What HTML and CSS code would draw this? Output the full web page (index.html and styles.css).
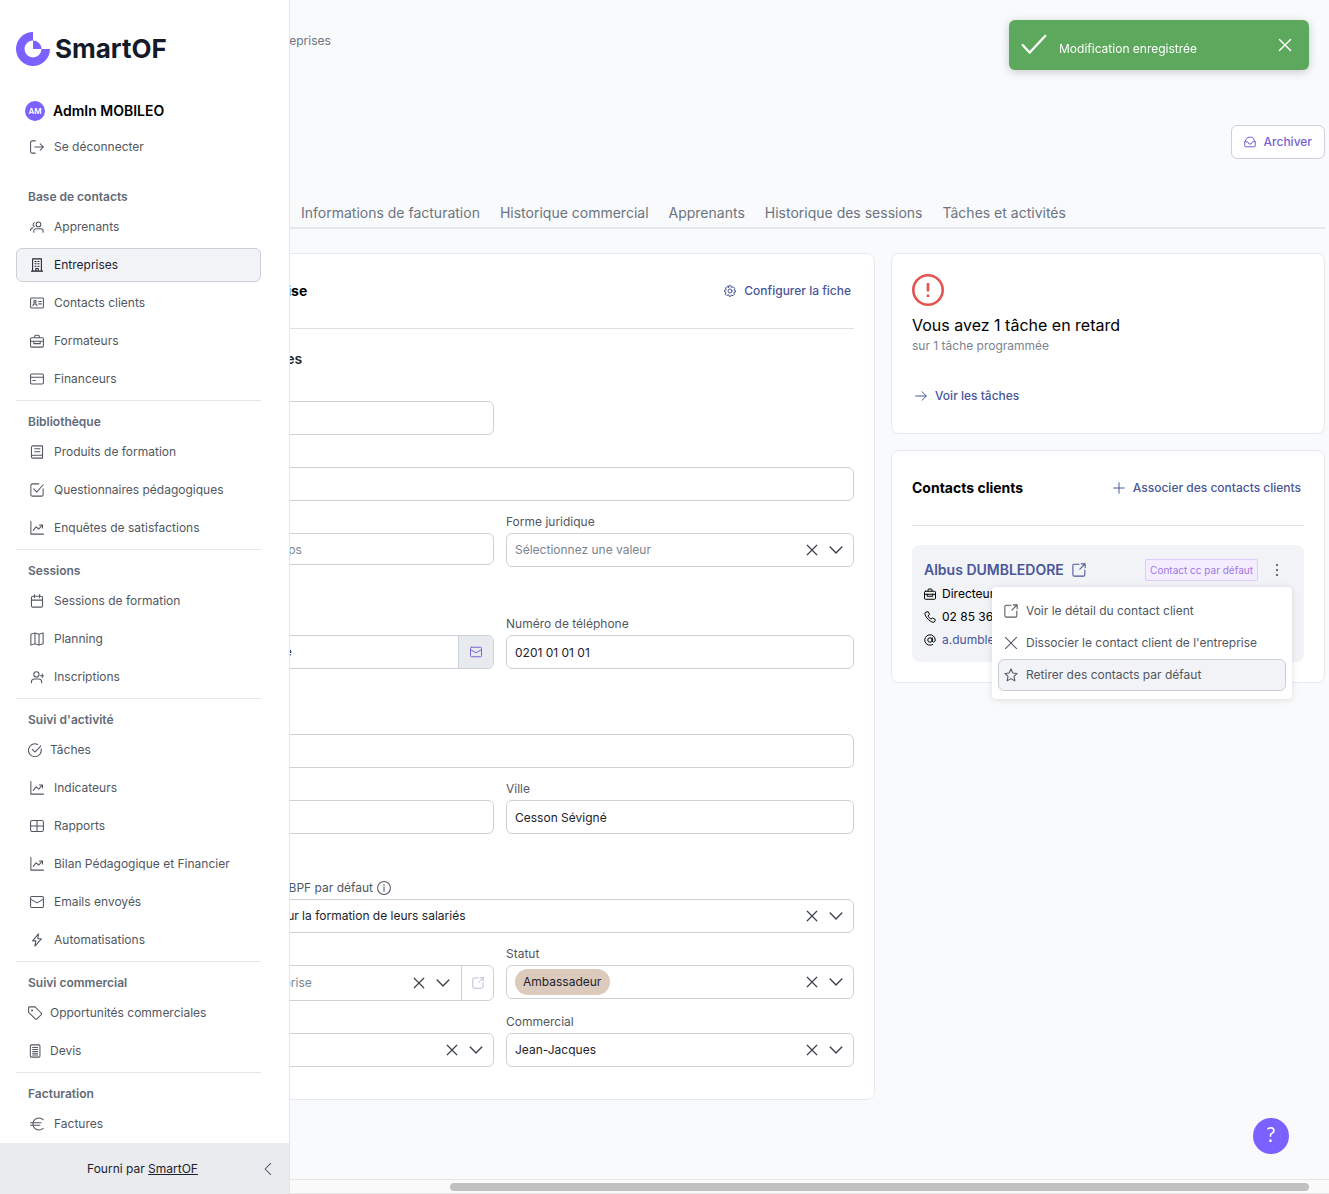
FILE: index.html
```html
<!DOCTYPE html>
<html lang="fr">
<head>
    <meta charset="UTF-8">
    <meta name="viewport" content="width=device-width, initial-scale=1.0">
    <title>SmartOF - Entreprises</title>
    <link rel="stylesheet" href="styles.css">
</head>
<body>
    <!-- Icon set -->
    <svg class="sprite" aria-hidden="true">
        <symbol id="i-logout" viewBox="0 0 24 24"><path d="M9 1.500H4a3 3 0 0 0-3 3v15a3 3 0 0 0 3 3h5M8 12h15M17.500 6.500 23 12l-5.500 5.500"/></symbol>
        <symbol id="i-users" viewBox="0 0 24 24"><circle cx="14.500" cy="7.500" r="4"/><path d="M6.500 21v-2a4 4 0 0 1 4-4h8a4 4 0 0 1 4 4v2M7.500 4.500a3.500 3.500 0 0 0 0 6.500M1 18v-1a4 4 0 0 1 4-3.500"/></symbol>
        <symbol id="i-building" viewBox="0 0 24 24"><path d="M4.500 1.500h15v21h-15zM2.500 22.500h19M10 22v-4h4v4"/><path d="M8.500 6h2M13.500 6h2M8.500 10h2M13.500 10h2M8.500 14h2M13.500 14h2"/></symbol>
        <symbol id="i-idcard" viewBox="0 0 24 24"><rect x="1" y="3.500" width="22" height="17" rx="1.500"/><circle cx="8.500" cy="9.500" r="2"/><path d="M5 16.500c0-4 7-4 7 0M15 9.500h4.500M15 13.500h4.500"/></symbol>
        <symbol id="i-briefcase" viewBox="0 0 24 24"><rect x="1" y="6.500" width="22" height="16" rx="2"/><path d="M8 6V4a2 2 0 0 1 2-2h4a2 2 0 0 1 2 2v2M1.500 12.500h21M6.500 12.500v4h11v-4"/></symbol>
        <symbol id="i-card" viewBox="0 0 24 24"><rect x="1" y="3.500" width="22" height="17" rx="2"/><path d="M1 9h22M5 14.500h4"/></symbol>
        <symbol id="i-book" viewBox="0 0 24 24"><path d="M21.500 17.500H5a2.500 2.500 0 0 0 0 5h16.500V1.500H5A2.500 2.500 0 0 0 2.500 4v16M8 6.500h9M8 11.500h9"/></symbol>
        <symbol id="i-check-square" viewBox="0 0 24 24"><path d="M22.500 10v10a2.500 2.500 0 0 1-2.500 2.500H4A2.500 2.500 0 0 1 1.500 20V4A2.500 2.500 0 0 1 4 1.500h11M6.500 10l5 5.500L22.500 3"/></symbol>
        <symbol id="i-chart" viewBox="0 0 24 24"><path d="M1.500 1v21.500H23M5.500 16l5-6 4.500 4 6-7M16 7h5.500v5"/></symbol>
        <symbol id="i-calendar" viewBox="0 0 24 24"><rect x="2.500" y="4" width="19" height="18.500" rx="2.500"/><path d="M2.500 10.500h19M7.500 1v5.500M16.500 1v5.500"/></symbol>
        <symbol id="i-map" viewBox="0 0 24 24"><path d="M1.500 4 8.500 1.500l7 2.500 7-2.500V20l-7 2.500-7-2.500-7 2.500zM8.500 1.500V20M15.500 4v18.500"/></symbol>
        <symbol id="i-user-plus" viewBox="0 0 24 24"><circle cx="11" cy="7.500" r="4.500"/><path d="M2.500 22v-2a5 5 0 0 1 5-4.500h7.500a5 5 0 0 1 5 4.500v2M21 7v6M18 10h6"/></symbol>
        <symbol id="i-check-circle" viewBox="0 0 24 24"><path d="M22.500 10a11 11 0 1 1-6-7.500M7.500 11l4.500 4.500L22 5"/></symbol>
        <symbol id="i-table" viewBox="0 0 24 24"><rect x="1" y="2.500" width="22" height="19" rx="3"/><path d="M1 12h22M12 2.500v19"/></symbol>
        <symbol id="i-mail" viewBox="0 0 24 24"><rect x="1" y="2.500" width="22" height="19" rx="2"/><path d="M1.500 7.500 12 13.500l10.500-6"/></symbol>
        <symbol id="i-bolt" viewBox="0 0 24 24"><path d="M14.500 1.500 4.500 13.500h5.500l-1.500 9 11-12.500h-6z"/></symbol>
        <symbol id="i-tag" viewBox="0 0 24 24"><path d="M1 2.500v8.500L12.500 22a2 2 0 0 0 3 0l7-7a2 2 0 0 0 0-3L12 1.500H2A1 1 0 0 0 1 2.500z"/><circle cx="7" cy="7.500" r=".8"/></symbol>
        <symbol id="i-doc" viewBox="0 0 24 24"><rect x="4" y="1.500" width="16.500" height="21" rx="2"/><path d="M8 6h8.500M8 9.500h8.500M8 13h8.500M8 16h8.500M8 19h8.500"/></symbol>
        <symbol id="i-euro" viewBox="0 0 24 24"><path d="M22.500 4.500A10.500 10.500 0 0 0 5 12a10.500 10.500 0 0 0 17.500 7.500M1 10h18M1 14h16"/></symbol>
        <symbol id="i-cog" viewBox="0 0 24 24"><circle cx="12" cy="12" r="4"/><path d="M10 1.500h4l1 3.500 3.500-1.500 3 3L20 10l3 1v3l-3.500 1 1.500 3.500-3 3-3.500-1.500-1 2.500h-3.500L9 19.500 5.500 21l-3-3L4 14.500 1 13.500v-3L4.500 9.500 3 6l3-3L9 5z"/></symbol>
        <symbol id="i-inbox" viewBox="0 0 24 24"><path d="M1.500 12v8A1.500 1.500 0 0 0 3 21.500h18a1.500 1.500 0 0 0 1.500-1.500v-8l-5-8.500A2 2 0 0 0 16 2.500H8a2 2 0 0 0-1.500 1zM1.500 11.500h5.500l3 4.500h4l3-4.500h5.500"/></symbol>
        <symbol id="i-arrow" viewBox="0 0 24 24"><path d="M1.500 12h21M14 3.500l8.500 8.500-8.500 8.500"/></symbol>
        <symbol id="i-plus" viewBox="0 0 24 24"><path d="M12 1.500v21M1.500 12h21"/></symbol>
        <symbol id="i-close" viewBox="0 0 24 24"><path d="m2.500 2.500 19 19M21.500 2.500l-19 19"/></symbol>
        <symbol id="i-down" viewBox="0 0 24 24"><path d="m2 7 10 10L22 7"/></symbol>
        <symbol id="i-left" viewBox="0 0 24 24"><path d="M16.500 2.500 7 12l9.500 9.500"/></symbol>
        <symbol id="i-external" viewBox="0 0 24 24"><path d="M12 2H4a2.500 2.500 0 0 0-2.500 2.500V20A2.500 2.500 0 0 0 4 22.500h15.500A2.500 2.500 0 0 0 22 20v-8M16 1.500h6.500V8M22.500 1.500 13.500 10.500"/></symbol>
        <symbol id="i-info" viewBox="0 0 24 24"><circle cx="12" cy="12" r="11"/><path d="M12 10.500v7M12 6v1.500"/></symbol>
        <symbol id="i-phone" viewBox="0 0 24 24"><path d="M7.500 1.500 3 2.500C1 4 1.500 8.500 5.500 13.500 10 19 16 23.500 20 22.500l2.500-3.500v-2l-5.500-3-3 2c-2.500-1-5-3.500-6-6l2.500-3z"/></symbol>
        <symbol id="i-at" viewBox="0 0 24 24"><circle cx="12" cy="12" r="4.500"/><path d="M16.500 7.500V13c0 4.500 6 4 6-1A10.500 10.500 0 1 0 17.500 21"/></symbol>
        <symbol id="i-star" viewBox="0 0 24 24"><path d="m12 1.500 3.200 7 7.300.8-5.400 5 1.500 7.700L12 18.200 5.400 22l1.500-7.700-5.400-5 7.300-.8z"/></symbol>
        <symbol id="i-check" viewBox="0 0 24 24"><path d="m1.500 12 6.500 7L22.500 3.500"/></symbol>
    </svg>

    <!-- Sidebar -->
    <aside class="sidebar">
        <div class="sidebar-body">
            <a class="logo" href="#">
                <svg width="34" height="34" viewBox="0 0 34 34" aria-hidden="true">
                    <path fill="#7b61ff" d="M17 0A17 17 0 1 0 34 17H25.500A8.500 8.500 0 1 1 17 8.500z"/>
                    <path fill="#7b61ff" d="M17 8.500A8.500 8.500 0 0 1 25.500 17H17z"/>
                </svg>
                <span>SmartOF</span>
            </a>
            <div class="user">
                <span class="avatar">AM</span>
                <span class="user-name">AdmIn MOBILEO</span>
            </div>
            <a class="nav-item" href="#"><span class="nav-icon"><svg class="icon"><use href="#i-logout"/></svg></span>Se déconnecter</a>

            <nav>
                <section class="nav-section">
                    <h2>Base de contacts</h2>
                    <a class="nav-item" href="#"><span class="nav-icon"><svg class="icon"><use href="#i-users"/></svg></span>Apprenants</a>
                    <a class="nav-item active" href="#"><span class="nav-icon"><svg class="icon"><use href="#i-building"/></svg></span>Entreprises</a>
                    <a class="nav-item" href="#"><span class="nav-icon"><svg class="icon"><use href="#i-idcard"/></svg></span>Contacts clients</a>
                    <a class="nav-item" href="#"><span class="nav-icon"><svg class="icon"><use href="#i-briefcase"/></svg></span>Formateurs</a>
                    <a class="nav-item" href="#"><span class="nav-icon"><svg class="icon"><use href="#i-card"/></svg></span>Financeurs</a>
                </section>
                <section class="nav-section">
                    <h2>Bibliothèque</h2>
                    <a class="nav-item" href="#"><span class="nav-icon"><svg class="icon"><use href="#i-book"/></svg></span>Produits de formation</a>
                    <a class="nav-item" href="#"><span class="nav-icon"><svg class="icon"><use href="#i-check-square"/></svg></span>Questionnaires pédagogiques</a>
                    <a class="nav-item" href="#"><span class="nav-icon"><svg class="icon"><use href="#i-chart"/></svg></span>Enquêtes de satisfactions</a>
                </section>
                <section class="nav-section">
                    <h2>Sessions</h2>
                    <a class="nav-item" href="#"><span class="nav-icon"><svg class="icon"><use href="#i-calendar"/></svg></span>Sessions de formation</a>
                    <a class="nav-item" href="#"><span class="nav-icon"><svg class="icon"><use href="#i-map"/></svg></span>Planning</a>
                    <a class="nav-item" href="#"><span class="nav-icon"><svg class="icon"><use href="#i-user-plus"/></svg></span>Inscriptions</a>
                </section>
                <section class="nav-section">
                    <h2>Suivi d'activité</h2>
                    <a class="nav-item" href="#"><span class="nav-icon narrow"><svg class="icon"><use href="#i-check-circle"/></svg></span>Tâches</a>
                    <a class="nav-item" href="#"><span class="nav-icon"><svg class="icon"><use href="#i-chart"/></svg></span>Indicateurs</a>
                    <a class="nav-item" href="#"><span class="nav-icon"><svg class="icon"><use href="#i-table"/></svg></span>Rapports</a>
                    <a class="nav-item" href="#"><span class="nav-icon"><svg class="icon"><use href="#i-chart"/></svg></span>Bilan Pédagogique et Financier</a>
                    <a class="nav-item" href="#"><span class="nav-icon"><svg class="icon"><use href="#i-mail"/></svg></span>Emails envoyés</a>
                    <a class="nav-item" href="#"><span class="nav-icon"><svg class="icon"><use href="#i-bolt"/></svg></span>Automatisations</a>
                </section>
                <section class="nav-section">
                    <h2>Suivi commercial</h2>
                    <a class="nav-item" href="#"><span class="nav-icon narrow"><svg class="icon"><use href="#i-tag"/></svg></span>Opportunités commerciales</a>
                    <a class="nav-item" href="#"><span class="nav-icon narrow"><svg class="icon"><use href="#i-doc"/></svg></span>Devis</a>
                </section>
                <section class="nav-section">
                    <h2>Facturation</h2>
                    <a class="nav-item" href="#"><span class="nav-icon"><svg class="icon"><use href="#i-euro"/></svg></span>Factures</a>
                </section>
            </nav>
        </div>
        <footer class="sidebar-footer">
            <p>Fourni par <a href="#">SmartOF</a></p>
            <button type="button" aria-label="Réduire le menu"><svg class="icon"><use href="#i-left"/></svg></button>
        </footer>
    </aside>

    <!-- Scrolled page -->
    <main class="main">
        <div class="viewport">
            <div class="content">
                <div class="breadcrumb"><a href="#">Base des contacts OF</a> &nbsp;/&nbsp; <a href="#">Entreprises</a></div>

                <div class="page-actions">
                    <button class="btn-archive" type="button"><svg class="icon small"><use href="#i-inbox"/></svg>Archiver</button>
                </div>

                <div class="tabs">
                    <a class="tab-first" href="#">Fiche entreprise</a>
                    <a href="#">Informations de facturation</a>
                    <a href="#">Historique commercial</a>
                    <a href="#">Apprenants</a>
                    <a href="#">Historique des sessions</a>
                    <a href="#">Tâches et activités</a>
                </div>

                <div class="columns">
                    <form class="card">
                        <div class="card-header">
                            <h2>Informations Entreprise</h2>
                            <button class="btn-link" type="button"><svg class="icon small"><use href="#i-cog"/></svg>Configurer la fiche</button>
                        </div>

                        <div class="form-section">
                            <h3>Informations générales</h3>
                            <div class="form-grid">
                                <div class="field">
                                    <label for="code">Code</label>
                                    <input class="control" type="text" id="code">
                                </div>
                                <div class="field wide">
                                    <label for="name">Nom</label>
                                    <input class="control" type="text" id="name">
                                </div>
                                <div class="field">
                                    <label for="siret">SIRET</label>
                                    <input class="control short" type="text" id="siret" placeholder="Remplissez ces 3 champs">
                                </div>
                                <div class="field">
                                    <label for="forme">Forme juridique</label>
                                    <div class="control select">
                                        <select id="forme" class="empty"><option>Sélectionnez une valeur</option></select>
                                        <button type="button" aria-label="Effacer"><svg class="icon small"><use href="#i-close"/></svg></button>
                                        <svg class="icon"><use href="#i-down"/></svg>
                                    </div>
                                </div>
                            </div>
                        </div>

                        <div class="form-section">
                            <h3>Coordonnées</h3>
                            <div class="form-grid">
                                <div class="field">
                                    <label for="email">Email</label>
                                    <div class="control group">
                                        <input type="email" id="email" value="contact@monentreprise">
                                        <button class="addon filled" type="button" aria-label="Envoyer un email"><svg class="icon small"><use href="#i-mail"/></svg></button>
                                    </div>
                                </div>
                                <div class="field">
                                    <label for="phone">Numéro de téléphone</label>
                                    <input class="control" type="tel" id="phone" value="0201 01 01 01">
                                </div>
                            </div>
                        </div>

                        <div class="form-section">
                            <h3>Adresse</h3>
                            <div class="form-grid">
                                <div class="field wide">
                                    <label for="street">Adresse</label>
                                    <input class="control" type="text" id="street">
                                </div>
                                <div class="field">
                                    <label for="zip">Code postal</label>
                                    <input class="control" type="text" id="zip">
                                </div>
                                <div class="field">
                                    <label for="city">Ville</label>
                                    <input class="control" type="text" id="city" value="Cesson Sévigné">
                                </div>
                            </div>
                        </div>

                        <div class="form-section">
                            <h3>Suivi</h3>
                            <div class="form-grid">
                                <div class="field wide">
                                    <label for="bpf">Origines de financement BPF par défaut <svg class="icon"><use href="#i-info"/></svg></label>
                                    <div class="control select">
                                        <select id="bpf"><option>Produits Entreprises pour la formation de leurs salariés</option></select>
                                        <button type="button" aria-label="Effacer"><svg class="icon small"><use href="#i-close"/></svg></button>
                                        <svg class="icon"><use href="#i-down"/></svg>
                                    </div>
                                </div>
                                <div class="field">
                                    <label for="parent">Entreprise mère</label>
                                    <div class="control select group tall">
                                        <select id="parent" class="empty"><option>Sélectionner une entreprise</option></select>
                                        <button type="button" aria-label="Effacer"><svg class="icon small"><use href="#i-close"/></svg></button>
                                        <svg class="icon"><use href="#i-down"/></svg>
                                        <button class="addon" type="button" aria-label="Ouvrir" disabled><svg class="icon small"><use href="#i-external"/></svg></button>
                                    </div>
                                </div>
                                <div class="field">
                                    <label for="status">Statut</label>
                                    <div class="control select">
                                        <select id="status" class="tag"><option>Ambassadeur</option></select>
                                        <button type="button" aria-label="Effacer"><svg class="icon small"><use href="#i-close"/></svg></button>
                                        <svg class="icon"><use href="#i-down"/></svg>
                                    </div>
                                </div>
                                <div class="field">
                                    <label for="origin">Origine</label>
                                    <div class="control select">
                                        <select id="origin"><option></option></select>
                                        <button type="button" aria-label="Effacer"><svg class="icon small"><use href="#i-close"/></svg></button>
                                        <svg class="icon"><use href="#i-down"/></svg>
                                    </div>
                                </div>
                                <div class="field">
                                    <label for="sales">Commercial</label>
                                    <div class="control select">
                                        <select id="sales"><option>Jean-Jacques</option></select>
                                        <button type="button" aria-label="Effacer"><svg class="icon small"><use href="#i-close"/></svg></button>
                                        <svg class="icon"><use href="#i-down"/></svg>
                                    </div>
                                </div>
                            </div>
                        </div>
                    </form>

                    <div class="side">
                        <section class="card">
                            <svg class="alert-icon" viewBox="0 0 32 32" aria-hidden="true">
                                <circle cx="16" cy="16" r="14.700"/>
                                <path d="M16 9v8.500M16 20.500v2.500"/>
                            </svg>
                            <p class="task-title">Vous avez 1 tâche en retard</p>
                            <p class="task-sub">sur 1 tâche programmée</p>
                            <a class="btn-link task-link" href="#"><svg class="icon small"><use href="#i-arrow"/></svg>Voir les tâches</a>
                        </section>

                        <section class="card">
                            <div class="card-header">
                                <h2>Contacts clients</h2>
                                <button class="btn-link" type="button"><svg class="icon small"><use href="#i-plus"/></svg>Associer des contacts clients</button>
                            </div>
                            <div class="contact">
                                <div class="contact-head">
                                    <a class="contact-name" href="#">Albus DUMBLEDORE <svg class="icon"><use href="#i-external"/></svg></a>
                                    <span class="badge">Contact cc par défaut</span>
                                    <button class="btn-more" type="button" aria-label="Actions">
                                        <svg viewBox="0 0 4 14" aria-hidden="true"><circle cx="2" cy="2" r="1"/><circle cx="2" cy="7" r="1"/><circle cx="2" cy="12" r="1"/></svg>
                                    </button>
                                </div>
                                <p class="contact-line"><svg class="icon small"><use href="#i-briefcase"/></svg>Directeur</p>
                                <p class="contact-line"><svg class="icon small"><use href="#i-phone"/></svg>02 85 36 00 00</p>
                                <p class="contact-line"><svg class="icon small"><use href="#i-at"/></svg><a href="#">a.dumbledore</a></p>

                                <div class="menu">
                                    <button type="button"><svg class="icon"><use href="#i-external"/></svg>Voir le détail du contact client</button>
                                    <button type="button"><svg class="icon"><use href="#i-close"/></svg>Dissocier le contact client de l'entreprise</button>
                                    <button class="active" type="button"><svg class="icon"><use href="#i-star"/></svg>Retirer des contacts par défaut</button>
                                </div>
                            </div>
                        </section>
                    </div>
                </div>
            </div>
        </div>
        <div class="scrollbar"><div class="scrollbar-thumb"></div></div>
    </main>

    <div class="toast" role="status">
        <svg class="toast-check"><use href="#i-check"/></svg>
        <span>Modification enregistrée</span>
        <button type="button" aria-label="Fermer"><svg class="icon"><use href="#i-close"/></svg></button>
    </div>

    <button class="help" type="button" aria-label="Aide">?</button>
</body>
</html>
```

FILE: styles.css
```css
* {
    box-sizing: border-box;
}

body {
    margin: 0;
    display: flex;
    height: 100vh;
    overflow: hidden;
    background-color: #f9fafc;
    color: #000;
    font-family: Inter, "Liberation Sans", sans-serif;
    font-size: 12px;
    line-height: 18px;
}

h2, h3, p {
    margin: 0;
}

a {
    color: inherit;
    text-decoration: none;
}

button, input, select {
    font: inherit;
    color: inherit;
}

button {
    background: none;
    border: none;
    padding: 0;
    cursor: pointer;
}

.sprite {
    display: none;
}

.icon {
    width: 14px;
    height: 14px;
    flex: none;
    fill: none;
    stroke: currentColor;
    stroke-width: 1.8;
    stroke-linecap: round;
    stroke-linejoin: round;
}

.icon.small {
    width: 12px;
    height: 12px;
    stroke-width: 2;
}

/* Sidebar */
.sidebar {
    width: 290px;
    flex: none;
    display: flex;
    flex-direction: column;
    background-color: #fff;
    border-right: 1px solid #e3e6ea;
    color: #515761;
}

.sidebar-body {
    flex: 1;
    min-height: 0;
    overflow: hidden;
    padding: 32px 28px 0 16px;
}

.logo {
    display: flex;
    align-items: center;
    gap: 5px;
    height: 34px;
    color: #141a29;
    font-size: 26px;
    font-weight: 700;
}

.user {
    display: flex;
    align-items: center;
    gap: 8px;
    margin: 35px 0 9px;
    padding-left: 9px;
}

.avatar {
    width: 20px;
    height: 20px;
    border-radius: 50%;
    background-color: #7b61ff;
    color: #fff;
    font-size: 8px;
    font-weight: 600;
    line-height: 20px;
    text-align: center;
}

.user-name {
    color: #000;
    font-size: 14px;
    font-weight: 600;
}

.nav-item {
    display: flex;
    align-items: center;
    gap: 8px;
    height: 34px;
    margin-bottom: 4px;
    padding: 0 11px;
    border: 1px solid transparent;
    border-radius: 6px;
}

.nav-item.active {
    background-color: #f1f3f7;
    border-color: #cbd0d6;
    color: #1c222c;
}

.nav-icon {
    width: 18px;
    display: flex;
    justify-content: center;
}

.nav-icon.narrow {
    width: 14px;
}

nav {
    padding-top: 8px;
}

.nav-section {
    padding-top: 12px;
    border-bottom: 1px solid #e3e6ea;
}

.nav-section h2 {
    margin-bottom: 4px;
    padding-left: 12px;
    font-size: 12px;
    font-weight: 600;
    color: #626a77;
}

.sidebar-footer {
    display: flex;
    align-items: center;
    height: 51px;
    padding: 0 14px 0 24px;
    background-color: #e9ebef;
    color: #1c222c;
}

.sidebar-footer p {
    flex: 1;
    text-align: center;
}

.sidebar-footer a {
    text-decoration: underline;
}

.sidebar-footer button {
    display: flex;
    color: #515761;
}

/* Page, scrolled all the way to the right */
.main {
    flex: 1;
    min-width: 0;
    display: flex;
    flex-direction: column;
}

.viewport {
    flex: 1;
    min-height: 0;
    overflow: hidden;
    display: flex;
    justify-content: flex-end;
}

.content {
    flex: none;
    width: calc(100% + 165px);
    padding: 32px 4px 0 0;
}

.breadcrumb {
    color: #6b7480;
}

.page-actions {
    display: flex;
    justify-content: flex-end;
    margin-top: 75px;
}

.btn-archive {
    display: flex;
    align-items: center;
    gap: 8px;
    height: 34px;
    padding: 0 12px;
    background-color: #fff;
    border: 1px solid #ccd1da;
    border-radius: 6px;
    color: #7a5fd3;
    font-weight: 500;
}

.tabs {
    display: flex;
    gap: 20px;
    margin-top: 44px;
    padding-bottom: 4px;
    border-bottom: 2px solid #e5e8ec;
    color: #6b7480;
    font-size: 14px;
    line-height: 20px;
    white-space: nowrap;
}

.tab-first {
    width: 156px;
}

.columns {
    display: grid;
    grid-template-columns: minmax(0, 750fr) minmax(0, 434fr);
    align-items: start;
    gap: 16px;
    margin-top: 24px;
}

.side {
    display: grid;
    gap: 16px;
}

.card {
    padding: 20px;
    background-color: #fff;
    border: 1px solid #e6e9f0;
    border-radius: 8px;
}

.card-header {
    display: flex;
    align-items: center;
    justify-content: space-between;
    margin-bottom: 19px;
    padding-bottom: 20px;
    border-bottom: 1px solid #dcdfe3;
}

.card-header h2 {
    font-size: 14px;
    font-weight: 700;
}

.btn-link {
    display: flex;
    align-items: center;
    gap: 8px;
    height: 34px;
    padding: 0 3px;
    color: #4a5699;
    font-weight: 500;
}

/* Form */
.form-section h3 {
    padding: 4px 0 9px;
    color: #1c222c;
    font-size: 14px;
    font-weight: 600;
    line-height: 20px;
}

.card-header + .form-section {
    padding-bottom: 3px;
}

.card-header + .form-section h3 {
    padding: 1px 0 12px;
}

.form-grid {
    display: grid;
    grid-template-columns: 1fr 1fr;
    column-gap: 12px;
}

.field {
    margin-bottom: 12px;
}

.field.wide {
    grid-column: span 2;
}

.field label {
    display: flex;
    align-items: center;
    gap: 4px;
    height: 20px;
    padding-bottom: 2px;
    color: #515761;
}

.control {
    display: block;
    width: 100%;
    height: 34px;
    padding: 0 8px;
    background-color: #fff;
    border: 1px solid #ced2d7;
    border-radius: 6px;
    color: #1c222c;
}

.control.short {
    height: 32px;
}

.control.tall {
    height: 36px;
}

.control::placeholder {
    color: #7b838f;
}

.control.select {
    display: flex;
    align-items: center;
    gap: 11px;
    padding-right: 10px;
}

.control select {
    flex: 1;
    min-width: 0;
    padding: 0;
    appearance: none;
    background: none;
    border: none;
}

.control select.empty {
    color: #7b838f;
}

.control select.tag {
    flex: none;
    height: 26px;
    margin-right: auto;
    padding: 0 8px;
    background-color: #dccbbd;
    border-radius: 13px;
}

.control.select button {
    display: flex;
}

.control.select .icon {
    color: #3c424b;
    stroke-width: 2.4;
}

.control.group {
    display: flex;
    padding-right: 0;
    overflow: hidden;
}

.control.group input {
    flex: 1;
    min-width: 0;
    padding: 0;
    border: none;
}

.control .addon {
    display: flex;
    align-items: center;
    justify-content: center;
    align-self: stretch;
    width: 32px;
    border-left: 1px solid #ced2d7;
}

.control .addon .icon {
    color: #b7bfdb;
    stroke-width: 2;
}

.control .addon.filled {
    width: 35px;
    background-color: #e7eaef;
}

.control .addon.filled .icon {
    color: #7b61d9;
}

/* Late task card */
.alert-icon {
    display: block;
    width: 32px;
    height: 32px;
    fill: none;
    stroke: #e4534f;
    stroke-width: 2.6;
}

.task-title {
    margin-top: 7px;
    font-size: 16px;
    line-height: 24px;
}

.task-sub {
    color: #7b838f;
}

.task-link {
    margin-top: 24px;
}

/* Contact */
.contact {
    position: relative;
    padding: 13px 12px 11px;
    background-color: #f1f3f7;
    border-radius: 8px;
}

.contact-head {
    display: flex;
    align-items: center;
    height: 24px;
}

.contact-name {
    display: flex;
    align-items: center;
    gap: 8px;
    margin-right: auto;
    color: #4a5699;
    font-size: 14px;
    font-weight: 600;
}

.badge {
    padding: 1px 4px;
    background-color: #f3edff;
    border: 1px solid #dccdfa;
    border-radius: 2px;
    color: #a078e0;
    font-size: 10px;
}

.btn-more {
    width: 34px;
    padding-left: 4px;
    display: flex;
    justify-content: center;
}

.btn-more svg {
    width: 4px;
    height: 14px;
    fill: #3c424b;
}

.contact-line {
    display: flex;
    align-items: center;
    gap: 6px;
    height: 23px;
}

.contact-line a {
    color: #4a5699;
}

.menu {
    position: absolute;
    z-index: 1;
    top: 42px;
    right: 12px;
    width: 300px;
    padding: 8px 6px;
    background-color: #fff;
    border-radius: 4px;
    box-shadow: 0 1px 6px rgba(0, 0, 0, 0.12);
}

.menu button {
    display: flex;
    align-items: center;
    gap: 8px;
    width: 100%;
    height: 32px;
    padding: 0 5px;
    border: 1px solid transparent;
    border-radius: 6px;
    color: #515761;
}

.menu button.active {
    background-color: #f1f3f7;
    border-color: #cbd0d6;
}

/* Scrollbar */
.scrollbar {
    height: 15px;
    padding: 3px 20px 3px 160px;
    background-color: #fafafa;
    border: 1px solid #e6e6e6;
    border-width: 1px 0;
}

.scrollbar-thumb {
    height: 8px;
    border-radius: 4px;
    background-color: #c1c1c1;
}

/* Floating elements */
.toast {
    position: fixed;
    z-index: 2;
    top: 20px;
    right: 20px;
    display: flex;
    align-items: center;
    width: 300px;
    height: 50px;
    padding: 0 17px 0 12px;
    background-color: #5ca85c;
    border-radius: 6px;
    box-shadow: 0 2px 10px rgba(0, 0, 0, 0.2);
    color: #fff;
}

.toast span {
    flex: 1;
    padding: 8px 0 0 12px;
}

.toast-check {
    width: 26px;
    height: 26px;
    fill: none;
    stroke: #fff;
    stroke-width: 2;
    stroke-linecap: round;
}

.toast button {
    display: flex;
}

.toast .icon {
    stroke-width: 2.4;
}

.help {
    position: fixed;
    right: 40px;
    bottom: 40px;
    width: 36px;
    height: 36px;
    padding-bottom: 4px;
    border-radius: 50%;
    background-color: #7b61ff;
    color: #fff;
    font-family: Lato, sans-serif;
    font-size: 21px;
    line-height: 32px;
    text-align: center;
}
```
